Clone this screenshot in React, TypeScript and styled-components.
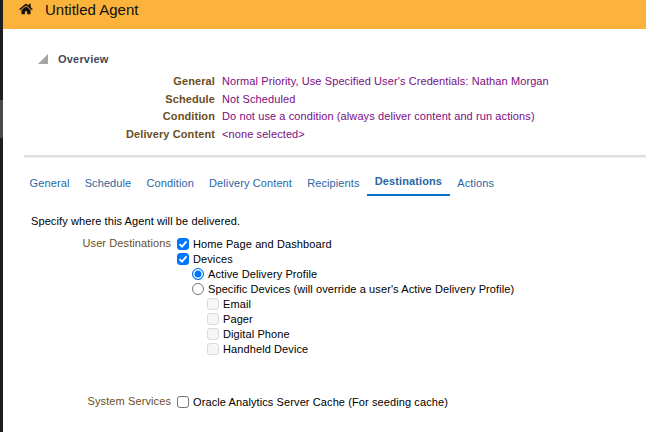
import React from 'react';
import styled, { createGlobalStyle } from 'styled-components';
import { FaHome } from 'react-icons/fa';

const GlobalStyle = createGlobalStyle`
  html, body {
    margin: 0;
    padding: 0;
    background: #ffffff;
    overflow: hidden;
  }
`;

const Page = styled.div`
  display: flex;
  width: 646px;
  height: 432px;
  overflow: hidden;
  font-family: "Liberation Sans", Arial, sans-serif;
  font-size: 11px;
  color: #000;
`;

const Rail = styled.div`
  flex: 0 0 3px;
  background: linear-gradient(#1e1e1e 0 100px, #4a4a4a 100px 138px, #1e1e1e 138px);
`;

const Main = styled.div`
  flex: 1;
  min-width: 0;
`;

const Header = styled.header`
  display: flex;
  align-items: center;
  gap: 12px;
  height: 29px;
  padding: 0 0 11px 16px;
  box-sizing: border-box;
  background: #fbb33b;
  font-size: 15px;
  color: #111;
  svg {
    width: 14px;
    height: 12px;
  }
`;

const Overview = styled.section`
  padding: 23px 0 0 35px;
`;

const OverviewTitle = styled.div`
  display: flex;
  align-items: center;
  gap: 10px;
  height: 14px;
  font-weight: bold;
  color: #3f4a5c;
  letter-spacing: 0.2px;
`;

const Triangle = styled.span`
  width: 0;
  height: 0;
  border-left: 10px solid transparent;
  border-bottom: 10px solid #a3a5a8;
`;

const Summary = styled.dl`
  display: grid;
  grid-template-columns: 177px auto;
  grid-auto-rows: 17.6px;
  justify-content: start;
  column-gap: 7px;
  margin: 7px 0 0;
  line-height: 17.6px;
`;

const SummaryLabel = styled.dt`
  text-align: right;
  font-weight: bold;
  color: #6b4e1e;
  letter-spacing: 0.1px;
`;

const SummaryValue = styled.dd`
  margin: 0;
  color: #7b0c82;
  letter-spacing: 0.1px;
`;

const Divider = styled.hr`
  height: 3px;
  margin: 12px 0 -1px 21px;
  border: 0;
  background: linear-gradient(#dadada, #e2e2e2 60%, #f6f6f6);
`;

const Tabs = styled.nav`
  display: flex;
  margin: 9px 0 0 19px;
  height: 30px;
`;

const Tab = styled.a<{ $active?: boolean }>`
  padding: ${p => (p.$active ? '9px 7.7px 0' : '11px 7.6px 0')};
  color: #2a66a3;
  font-weight: ${p => (p.$active ? 'bold' : 'normal')};
  border-bottom: ${p => (p.$active ? '2px solid #0572ce' : '2px solid transparent')};
  letter-spacing: 0.1px;
`;

const Intro = styled.p`
  margin: 18px 0 0 28px;
  line-height: 14px;
  letter-spacing: 0.1px;
`;

const Section = styled.div<{ $top: number }>`
  display: grid;
  grid-template-columns: 168px auto;
  justify-content: start;
  column-gap: 6px;
  margin-top: ${p => p.$top}px;
`;

const SectionLabel = styled.div`
  text-align: right;
  line-height: 15px;
  color: #6b4e1e;
  letter-spacing: 0.1px;
`;

const Options = styled.div`
  display: flex;
  flex-direction: column;
`;

const Option = styled.label<{ $depth?: number }>`
  display: flex;
  align-items: center;
  gap: 4px;
  height: 15px;
  padding-left: ${p => (p.$depth ?? 0) * 15}px;
  letter-spacing: 0.1px;
`;

const CheckBox = styled.span<{ $checked?: boolean; $disabled?: boolean }>`
  display: flex;
  align-items: center;
  justify-content: center;
  width: 12px;
  height: 12px;
  box-sizing: border-box;
  border-radius: 3px;
  background: ${p => (p.$checked ? '#0075ff' : p.$disabled ? '#f6f6f6' : '#fff')};
  border: 1px solid ${p => (p.$checked ? '#0075ff' : p.$disabled ? '#dadada' : '#767676')};
`;

const Radio = styled.span<{ $checked?: boolean }>`
  width: 12px;
  height: 12px;
  box-sizing: border-box;
  border-radius: 50%;
  background: ${p => (p.$checked ? '#0075ff' : '#fff')};
  border: 1px solid ${p => (p.$checked ? '#0075ff' : '#767676')};
  box-shadow: ${p => (p.$checked ? 'inset 0 0 0 1.5px #fff' : 'none')};
`;

const Tick = () => (
  <svg width="10" height="10" viewBox="0 0 10 10" fill="none">
    <path d="M1.5 5.2 4 7.6 8.5 2.4" stroke="#fff" strokeWidth="1.8" />
  </svg>
);

const summary = [
  ['General', "Normal Priority, Use Specified User's Credentials: Nathan Morgan"],
  ['Schedule', 'Not Scheduled'],
  ['Condition', 'Do not use a condition (always deliver content and run actions)'],
  ['Delivery Content', '<none selected>'],
];

const tabs = ['General', 'Schedule', 'Condition', 'Delivery Content', 'Recipients', 'Destinations', 'Actions'];

const devices = ['Email', 'Pager', 'Digital Phone', 'Handheld Device'];

const App: React.FC = () => {
  return (
    <Page>
      <GlobalStyle />
      <Rail />
      <Main>
        <Header>
          <FaHome />
          <span>Untitled Agent</span>
        </Header>
        <Overview>
          <OverviewTitle>
            <Triangle />
            Overview
          </OverviewTitle>
          <Summary>
            {summary.map(([label, value]) => (
              <React.Fragment key={label}>
                <SummaryLabel>{label}</SummaryLabel>
                <SummaryValue>{value}</SummaryValue>
              </React.Fragment>
            ))}
          </Summary>
        </Overview>
        <Divider />
        <Tabs>
          {tabs.map(tab => (
            <Tab key={tab} $active={tab === 'Destinations'}>
              {tab}
            </Tab>
          ))}
        </Tabs>
        <Intro>Specify where this Agent will be delivered.</Intro>
        <Section $top={8}>
          <SectionLabel>User Destinations</SectionLabel>
          <Options>
            <Option>
              <CheckBox $checked>
                <Tick />
              </CheckBox>
              Home Page and Dashboard
            </Option>
            <Option>
              <CheckBox $checked>
                <Tick />
              </CheckBox>
              Devices
            </Option>
            <Option $depth={1}>
              <Radio $checked />
              Active Delivery Profile
            </Option>
            <Option $depth={1}>
              <Radio />
              Specific Devices (will override a user's Active Delivery Profile)
            </Option>
            {devices.map(device => (
              <Option key={device} $depth={2}>
                <CheckBox $disabled />
                {device}
              </Option>
            ))}
          </Options>
        </Section>
        <Section $top={38}>
          <SectionLabel>System Services</SectionLabel>
          <Options>
            <Option>
              <CheckBox />
              Oracle Analytics Server Cache (For seeding cache)
            </Option>
          </Options>
        </Section>
      </Main>
    </Page>
  );
};

export default App;
